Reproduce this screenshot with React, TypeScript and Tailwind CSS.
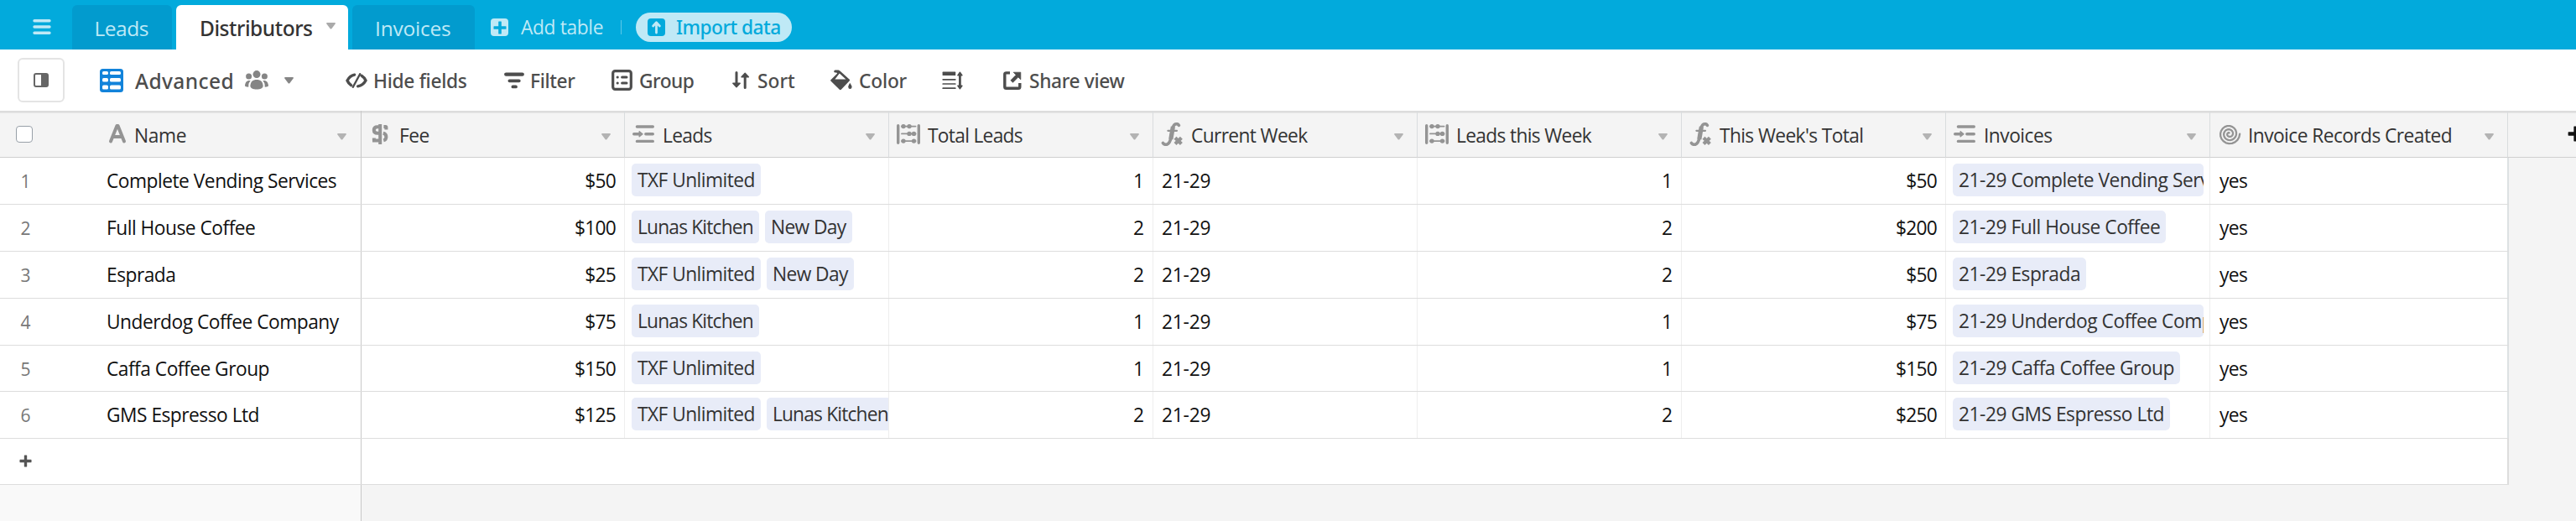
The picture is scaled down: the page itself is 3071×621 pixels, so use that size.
import React from 'react'
import clsx from 'clsx'

type ColumnType = 'text' | 'currency' | 'link' | 'count' | 'formula' | 'spiral'

type Column = {
  name: string
  type: ColumnType
  width: string
  tracking: string
}

type Tag = {
  label: string
  tracking: string
}

const columns: Column[] = [
  { name: 'Fee', type: 'currency', width: 'w-[314px]', tracking: 'tracking-[-0.5px]' },
  { name: 'Leads', type: 'link', width: 'w-[315px]', tracking: 'tracking-[-0.7px]' },
  { name: 'Total Leads', type: 'count', width: 'w-[315px]', tracking: 'tracking-[-0.7px]' },
  { name: 'Current Week', type: 'formula', width: 'w-[315px]', tracking: 'tracking-[-0.63px]' },
  { name: 'Leads this Week', type: 'count', width: 'w-[315px]', tracking: 'tracking-[-0.66px]' },
  { name: "This Week's Total", type: 'formula', width: 'w-[315px]', tracking: 'tracking-[-0.62px]' },
  { name: 'Invoices', type: 'link', width: 'w-[315px]', tracking: 'tracking-[-0.5px]' },
  { name: 'Invoice Records Created', type: 'spiral', width: 'w-[355px]', tracking: 'tracking-[-0.56px]' },
]

const txf: Tag = { label: 'TXF Unlimited', tracking: 'tracking-[-0.54px]' }
const lunas: Tag = { label: 'Lunas Kitchen', tracking: 'tracking-[-0.82px]' }
const newDay: Tag = { label: 'New Day', tracking: 'tracking-[-0.6px]' }

const rows = [
  { name: 'Complete Vending Services', fee: '$50', leads: [txf], total: 1, week: 1, weekTotal: '$50', height: 'h-[56px]' },
  { name: 'Full House Coffee', fee: '$100', leads: [lunas, newDay], total: 2, week: 2, weekTotal: '$200', height: 'h-[56px]' },
  { name: 'Esprada', fee: '$25', leads: [txf, newDay], total: 2, week: 2, weekTotal: '$50', height: 'h-[56px]' },
  { name: 'Underdog Coffee Company', fee: '$75', leads: [lunas], total: 1, week: 1, weekTotal: '$75', height: 'h-[56px]' },
  { name: 'Caffa Coffee Group', fee: '$150', leads: [txf], total: 1, week: 1, weekTotal: '$150', height: 'h-[55px]' },
  { name: 'GMS Espresso Ltd', fee: '$125', leads: [txf, lunas], total: 2, week: 2, weekTotal: '$250', height: 'h-[56px]' },
]

// spiral runs clockwise from its outer end on the right towards the centre
const spiralPath = Array.from({ length: 55 }, (_, i) => {
  const turn = (i / 54) * 2.75
  const radius = 12.6 - 4.1 * turn
  const angle = turn * Math.PI * 2
  return `${i ? 'L' : 'M'}${(13.6 + radius * Math.cos(angle)).toFixed(2)} ${(13.6 + radius * Math.sin(angle)).toFixed(2)}`
}).join('')

function Caret({ className }: { className?: string }) {
  return (
    <svg viewBox="0 0 11 8" className={clsx('h-2 w-[11px] shrink-0 fill-current', className)}>
      <path d="M0.6 0H10.4L11 1L6.3 7.2Q5.5 8 4.7 7.2L0 1Z" />
    </svg>
  )
}

function Plus({ className }: { className?: string }) {
  return (
    <svg viewBox="0 0 16 16" className={clsx('shrink-0 fill-current', className)}>
      <path d="M6.2 1Q6.2 .5 6.7 .5H9.3Q9.8 .5 9.8 1V6.2H15Q15.5 6.2 15.5 6.7V9.3Q15.5 9.8 15 9.8H9.8V15Q9.8 15.5 9.3 15.5H6.7Q6.2 15.5 6.2 15V9.8H1Q.5 9.8 .5 9.3V6.7Q.5 6.2 1 6.2H6.2Z" />
    </svg>
  )
}

function FieldIcon({ type }: { type: ColumnType }) {
  const cls = 'h-7 w-7 shrink-0 text-[#949494]'
  switch (type) {
    case 'text':
      return (
        <svg viewBox="0 0 28 28" className={cls} fill="none" stroke="currentColor" strokeWidth="4" strokeLinecap="round" strokeLinejoin="round">
          <path d="M4 22.4L11.4 4H12.6L20 22.4M7 17H17" />
        </svg>
      )
    case 'currency':
      return (
        <svg viewBox="0 0 28 28" className={cls} fill="none" stroke="currentColor" strokeWidth="4">
          <path d="M14 5.2H10Q5.8 5.2 5.8 9T10 12.8H13.6M4 21.4H13.6M5.9 21.4V18.6M13.2 2V26" />
          <path d="M17.4 5H19.8Q20.4 5 20.4 5.6V8.6M16.8 12.8Q20.4 13.6 20.4 17.2Q20.4 20.6 17.2 21.4" />
        </svg>
      )
    case 'link':
      return (
        <svg viewBox="0 0 28 28" className={cls} fill="none" stroke="currentColor" strokeWidth="3.4" strokeLinecap="round">
          <path d="M5.4 5H24.3M5.4 22.4H24.3M15.8 13.8H24.3M1.7 13.8H8" />
          <path d="M8.2 10.8L12 13.8L8.2 16.8Z" fill="currentColor" strokeWidth="1.4" strokeLinejoin="round" />
        </svg>
      )
    case 'count':
      return (
        <svg viewBox="0 0 28 28" className={cls} fill="currentColor" stroke="currentColor" strokeLinecap="round">
          <path d="M1.7 3.7V24.3M26.3 3.7V24.3" strokeWidth="3.4" />
          <path d="M6 4.6H22.5M6 13.4H22.5M6 22.1H22.5" strokeWidth="1.9" />
          <g stroke="none">
            <circle cx="8" cy="4.6" r="2.7" />
            <circle cx="15" cy="4.6" r="2.7" />
            <circle cx="15" cy="13.4" r="2.7" />
            <circle cx="20.5" cy="13.4" r="2.7" />
            <circle cx="8" cy="22.1" r="2.7" />
            <circle cx="20.5" cy="22.1" r="2.7" />
          </g>
        </svg>
      )
    case 'formula':
      return (
        <svg viewBox="0 0 28 28" className={cls} fill="none" stroke="currentColor" strokeLinecap="round">
          <path d="M21.4 3.4Q20 1 17.2 2Q14.6 3.1 13.6 8.4L11.8 18.6Q10.6 25 7 26.2Q4 26.8 2.4 24.4" strokeWidth="3.6" />
          <path d="M14.4 5L11.8 20" strokeWidth="5.2" strokeLinecap="butt" />
          <path d="M8.4 9.8H19" strokeWidth="2.2" />
          <path d="M17 18.2L24.4 25.4M24.4 18.2L17 25.4" strokeWidth="4.2" strokeLinecap="butt" />
        </svg>
      )
    default:
      return (
        <svg viewBox="0 0 28 28" className={cls} fill="none" stroke="currentColor" strokeWidth="2.3" strokeLinecap="round" strokeLinejoin="round">
          <path d={spiralPath} />
        </svg>
      )
  }
}

function ColumnHeader({ column }: { column: Column }) {
  return (
    <div
      className={clsx(
        'flex shrink-0 items-center border-r border-b border-r-[#d9dcde] border-b-[#cfcfcf] bg-[#f4f4f4] pr-4 pl-[9px] shadow-[inset_0_2px_0_#dcdcdc,inset_0_3px_0_#e6e6e6]',
        column.width,
      )}
    >
      <FieldIcon type={column.type} />
      <span className={clsx('pt-[5px]', column.type === 'count' ? 'ml-[9px]' : 'ml-2', column.tracking)}>{column.name}</span>
      <Caret className="mt-1.5 ml-auto text-[#b3b3b3]" />
    </div>
  )
}

function Pill({ label, tracking }: Tag) {
  return (
    <span className={clsx('flex h-[39px] shrink-0 items-center rounded-[5px] bg-[#e8ecf8] px-[7px] pt-px text-[#333]', tracking)}>
      {label}
    </span>
  )
}

function Row({ row, index }: { row: (typeof rows)[number]; index: number }) {
  const cell = 'flex w-[315px] shrink-0 items-center border-r border-[#eeeeee] px-2.5 pt-[2px]'
  return (
    <div className={clsx('flex w-[2991px] shrink-0 border-b border-[#dddddd] bg-white', row.height)}>
      <div className="flex w-[431px] shrink-0 items-center border-r border-[#c8c8c8] pt-[2px]">
        <span className="w-[61px] text-center text-[21px] text-[#777]">{index + 1}</span>
        <span className="ml-[66px] tracking-[-0.5px]">{row.name}</span>
      </div>
      <div className={clsx(cell, 'w-[314px]! justify-end tracking-[-0.74px]')}>{row.fee}</div>
      <div className="flex w-[315px] shrink-0 items-start gap-[7px] overflow-hidden border-r border-[#eeeeee] pt-[7px] pl-2">
        {row.leads.map((lead) => (
          <Pill key={lead.label} {...lead} />
        ))}
      </div>
      <div className={clsx(cell, 'justify-end')}>{row.total}</div>
      <div className={clsx(cell, 'tracking-[-0.2px]')}>21-29</div>
      <div className={clsx(cell, 'justify-end')}>{row.week}</div>
      <div className={clsx(cell, 'justify-end tracking-[-0.74px]')}>{row.weekTotal}</div>
      <div className="flex w-[315px] shrink-0 items-start border-r border-[#eeeeee] pt-[7px] pr-[7px] pl-2">
        <div className="flex h-[39px] overflow-hidden rounded-[5px]">
          <Pill label={`21-29 ${row.name}`} tracking="tracking-[-0.47px]" />
        </div>
      </div>
      <div className="flex w-[356px] shrink-0 items-center border-r-2 border-[#dde1e3] pt-[2px] pl-[11px] tracking-[-0.6px]">yes</div>
    </div>
  )
}

function TopBar() {
  const tab = 'flex h-[53px] shrink-0 items-center rounded-t-md pt-[3px] text-[24.5px]'
  return (
    <div className="flex h-[59px] shrink-0 items-end bg-[#02aadc] text-[#bfe9f6]">
      <svg viewBox="0 0 22 18" className="mr-[25px] mb-[18px] ml-[39px] h-[18px] w-[22px]" stroke="currentColor" strokeWidth="3.4" strokeLinecap="round">
        <path d="M2 1.8H20M2 9H20M2 16.2H20" />
      </svg>
      <div className={clsx(tab, 'w-[119px] bg-[#029bce] pl-[26.5px] tracking-[-0.5px]')}>Leads</div>
      <div className={clsx(tab, "ml-[5px] w-[205px] bg-white pl-[28px] font-['Noto_Sans'] font-medium tracking-[-0.45px] text-[#333]")}>
        Distributors
        <Caret className="mb-1.5 ml-[16px] text-[#aaa]" />
      </div>
      <div className={clsx(tab, 'ml-[5px] w-[146px] bg-[#029bce] pl-[27px] tracking-[-0.2px]')}>Invoices</div>
      <div className="flex h-[53px] items-center">
        <span className="ml-[19px] flex size-[21px] items-center justify-center rounded bg-[#bfe9f6] text-[#02aadc]">
          <Plus className="size-[16px]" />
        </span>
        <span className="ml-[15px] w-[119px] pt-px tracking-[-0.35px]">Add table</span>
        <span className="h-[17px] w-px bg-[#5cc8e8]" />
        <div className="ml-[17px] flex h-[35px] w-[186px] items-center rounded-full bg-[#bfe9f6] pl-[14px] text-[#02aadc]">
          <svg viewBox="0 0 21 21" className="size-[21px]">
            <rect width="21" height="21" rx="4" fill="currentColor" />
            <path d="M10.5 17V6M6.6 9L10.5 4.8L14.4 9" stroke="#bfe9f6" strokeWidth="2.8" strokeLinecap="round" strokeLinejoin="round" fill="none" />
          </svg>
          <span className="ml-[13px] pt-px font-['Noto_Sans'] font-medium tracking-[-0.55px]">Import data</span>
        </div>
      </div>
    </div>
  )
}

function Toolbar() {
  const button = 'flex shrink-0 items-center'
  return (
    <div className="flex h-[73px] shrink-0 items-center bg-white font-['Noto_Sans'] font-medium text-[#4d4d4d]">
      <div className="ml-[21px] flex h-[53px] w-[56px] items-center justify-center rounded-md border-[2.6px] border-[#e4e4e4]">
        <svg viewBox="0 0 18 17" className="h-[17px] w-[18px]">
          <rect x="1" y="1" width="16" height="15" rx="2" fill="none" stroke="#666" strokeWidth="2" />
          <path d="M9 1H15Q17 1 17 3V14Q17 16 15 16H9Z" fill="#666" />
        </svg>
      </div>
      <svg viewBox="0 0 28 28" className="ml-[42px] size-7">
        <rect width="28" height="28" rx="3.5" fill="#1283da" />
        <g fill="#fff">
          <rect x="3" y="3" width="7" height="4" rx="1.6" />
          <rect x="12" y="3" width="13" height="4" rx="1.6" />
          <rect x="3" y="11" width="7" height="4.6" rx="1.6" />
          <rect x="12" y="11" width="13" height="4.6" rx="1.6" />
          <rect x="3" y="19.6" width="7" height="5" rx="1.6" />
          <rect x="12" y="19.6" width="13" height="5" rx="1.6" />
        </g>
      </svg>
      <span className="ml-[14px] w-[131px] pt-[3px] text-[24.5px] tracking-[0.4px]">Advanced</span>
      {/* collaborators */}
      <svg viewBox="0 0 28 23" className="h-[23px] w-7" fill="#858585">
        <circle cx="14" cy="4.6" r="4.5" />
        <circle cx="4.6" cy="7" r="3.5" />
        <circle cx="23.4" cy="7" r="3.5" />
        <path d="M14 11C18.6 11 21.4 13.4 21.6 18.4C21.4 21 18.4 22.4 14 22.4S6.6 21 6.4 18.4C6.6 13.4 9.4 11 14 11Z" />
        <path d="M5.6 12C3.4 11.8 .4 13 0 18.2C.6 19.4 2.4 19.8 4.4 19.6C4 16.6 4.6 14 6.6 12.4ZM22.4 12C24.6 11.8 27.6 13 28 18.2C27.4 19.4 25.6 19.8 23.6 19.6C24 16.6 23.4 14 21.4 12.4Z" />
      </svg>
      <Caret className="ml-[19px] text-[#858585]" />

      <div className={clsx(button, 'ml-[62px] w-[189px]')}>
        <svg viewBox="0 0 26 18" className="h-[18px] w-[26px]" fill="none" stroke="currentColor" strokeLinecap="round">
          <path d="M10.6 2.2Q5 3.4 2 9Q3.4 12.4 6.6 14.6M19 3.2Q22.6 5.6 24 9Q21 14.6 14.6 15.8" strokeWidth="3.4" />
          <path d="M17.2 1.2L8.8 16.8" strokeWidth="2.4" />
        </svg>
        <span className="ml-[7px] pt-[3px] tracking-[-0.3px]">Hide fields</span>
      </div>
      <div className={clsx(button, 'w-[128px]')}>
        <svg viewBox="0 0 24 20" className="h-5 w-6" stroke="currentColor" strokeWidth="4.4" strokeLinecap="round">
          <path d="M2.3 2.6H21.7" />
          <path d="M6.4 10.3H17.8M10.4 17.4H14" strokeWidth="3.8" />
        </svg>
        <span className="ml-[7px] pt-[3px] tracking-[-0.35px]">Filter</span>
      </div>
      <div className={clsx(button, 'w-[143px]')}>
        <svg viewBox="0 0 25 25" className="size-[25px]" stroke="currentColor" strokeLinecap="round">
          <rect x="1.7" y="1.7" width="21.6" height="21.6" rx="2.6" fill="none" strokeWidth="3.2" />
          <path d="M12.6 9H18M12.6 16H18" strokeWidth="3" />
          <path d="M7.2 9V9.01M7.2 16V16.01" strokeWidth="3.2" />
        </svg>
        <span className="ml-[8px] pt-[3px] tracking-[-0.5px]">Group</span>
      </div>
      <div className={clsx(button, 'w-[118px]')}>
        <svg viewBox="0 0 22 21" className="h-[21px] w-[22px]" stroke="currentColor" fill="currentColor" strokeWidth="3" strokeLinecap="round">
          <path d="M6 1.6V15M16.2 19.4V6" />
          <path d="M1.8 14.2H10.2L6 18.8ZM12 6.8H20.4L16.2 2.2Z" strokeWidth="1.4" strokeLinejoin="round" />
        </svg>
        <span className="ml-[9px] pt-[3px]">Sort</span>
      </div>
      <div className={clsx(button, 'w-[133px]')}>
        <svg viewBox="0 0 26 25" className="h-[25px] w-[26px]" fill="currentColor">
          <path d="M.4 13.4Q-.2 12.8 .4 12.2L8.2 4.6L7.2 3.6H5.4Q4 3.4 4.2 2Q4.6 .6 6 .6H9.6L11.4 1.4L22.8 11.8Q23.4 12.6 22.8 13.2L12.8 23.8Q11.8 24.6 10.8 23.8ZM5.4 11.6H18.4L10.8 4.6Z" fillRule="evenodd" />
          <path d="M23.2 15.8Q25.6 19.2 25.6 20.8Q25.4 23 23.4 23T21.2 20.8Q21.2 19.2 23.2 15.8Z" />
        </svg>
        <span className="ml-[8px] pt-[3px] tracking-[-0.2px]">Color</span>
      </div>
      <div className={clsx(button, 'w-[73px]')}>
        <svg viewBox="0 0 25 22" className="h-[22px] w-[25px]" fill="currentColor" stroke="currentColor">
          <rect x="0.6" y="0.6" width="15.6" height="4.4" rx=".6" stroke="none" />
          <path d="M1.2 9.8H15.8M1.2 15H15.8M1.2 20.2H15.8" strokeWidth="1.7" strokeLinecap="round" />
          <path d="M21.4 3V19" strokeWidth="2.8" />
          <path d="M18.8 4.8L21.4 1.2L24 4.8ZM18.8 17.2L21.4 20.8L24 17.2Z" strokeWidth="1.4" strokeLinejoin="round" />
        </svg>
      </div>
      <div className={button}>
        <svg viewBox="0 0 22 22" className="size-[22px]" fill="none" stroke="currentColor">
          <path d="M8 1.9H3.6Q1.8 1.9 1.8 3.6V18.4Q1.8 20.2 3.6 20.2H18Q19.8 20.2 19.8 18.4V14" strokeWidth="3.4" />
          <path d="M10 12.2L17.4 4.8" strokeWidth="4.2" />
          <path d="M12.2 1.2H20.8V9.8Z" fill="currentColor" strokeWidth=".8" strokeLinejoin="round" />
        </svg>
        <span className="ml-[9px] pt-[3px] tracking-[-0.35px]">Share view</span>
      </div>
    </div>
  )
}

export default function App() {
  return (
    <div className="flex h-[621px] w-[3071px] flex-col overflow-hidden bg-[#f4f4f4] font-['Open_Sans',sans-serif] text-[22.75px] leading-none whitespace-nowrap text-[#111]">
      <TopBar />
      <Toolbar />

      {/* Grid header */}
      <div className="flex h-14 shrink-0 text-[#333]">
        <div className="flex w-[431px] shrink-0 items-center border-r border-b border-r-[#c8c8c8] border-b-[#cfcfcf] bg-[#f4f4f4] pr-[17px] shadow-[inset_0_2px_0_#dcdcdc,inset_0_3px_0_#e6e6e6]">
          <span className="ml-[19px] size-5 rounded-[4px] border-[1.4px] border-[#98a0a8] bg-white" />
          <span className="ml-[89px] flex">
            <FieldIcon type="text" />
          </span>
          <span className="ml-[4px] pt-[5px] tracking-[-0.4px]">Name</span>
          <Caret className="mt-1.5 ml-auto text-[#b3b3b3]" />
        </div>
        {columns.map((column) => (
          <ColumnHeader key={column.name} column={column} />
        ))}
        <div className="flex flex-1 items-center overflow-hidden border-b border-[#cfcfcf] pl-[71px] text-[#111] shadow-[inset_0_2px_0_#dcdcdc,inset_0_3px_0_#e6e6e6]">
          <Plus className="size-[19px]" />
        </div>
      </div>

      {rows.map((row, index) => (
        <Row key={row.name} row={row} index={index} />
      ))}

      <div className="flex h-[55px] w-[2991px] shrink-0 border-r-2 border-b border-[#dddddd] bg-white">
        <div className="flex w-[431px] items-center border-r border-[#c8c8c8] pl-[23px] text-[#555]">
          <Plus className="mb-px size-[15px]" />
        </div>
      </div>
      <div className="flex flex-1">
        <div className="w-[431px] border-r border-[#c8c8c8] bg-[#f9f9f9]" />
      </div>
    </div>
  )
}
